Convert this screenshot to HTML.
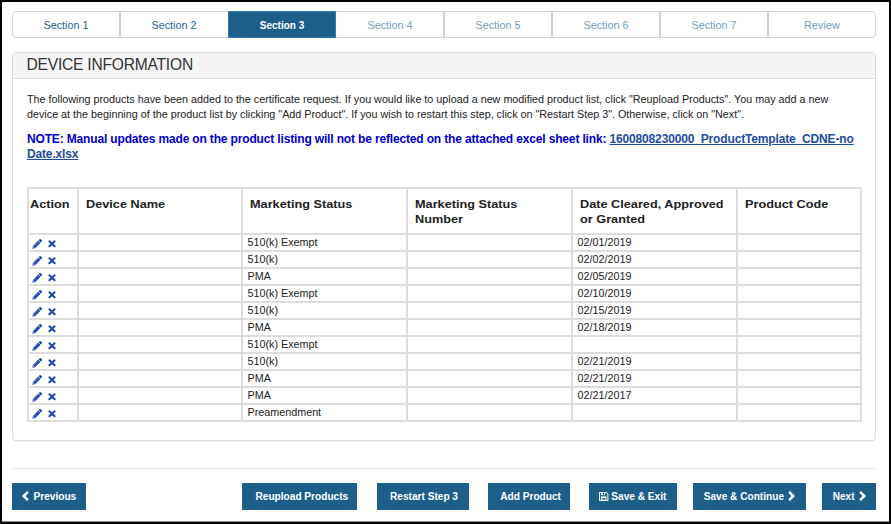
<!DOCTYPE html>
<html><head><meta charset="utf-8">
<style>
*{box-sizing:border-box;margin:0;padding:0}
html,body{width:891px;height:524px;overflow:hidden;background:#fff}
body{font-family:"Liberation Sans",sans-serif;position:relative;color:#222}
div,span,svg{position:absolute}
.fr{left:0;top:0;width:891px;height:524px;border:2px solid #000;z-index:10}
.fb{left:2px;top:521px;width:887px;height:1px;background:#8c8c8c;z-index:10}
.tabs{left:12px;top:11px;width:864px;height:27px;border:1px solid #d4d4d4;border-radius:4px;background:#fff}
.tab{top:11px;width:108px;height:27px;text-align:center;font-size:10.8px;line-height:29px;color:#709dbc;white-space:nowrap}
.tab.done{color:#246394}
.tab.act{background:#1e5f8a;border:1px solid #337ab7;color:#fff;font-weight:bold;font-size:10px;line-height:27px}
.sep{top:12px;width:2px;height:25px;background:#d0d0d0}
.panel{left:12px;top:52px;width:864px;height:389px;border:1px solid #ddd;border-radius:4px;background:#fff;box-shadow:0 1px 1px rgba(0,0,0,.05)}
.phead{left:13px;top:53px;width:862px;height:25px;background:#f5f5f5;border-radius:3px 3px 0 0}
.pline{left:13px;top:78px;width:862px;height:1px;background:#ddd}
.h{left:26.5px;top:52px;font-size:15.6px;letter-spacing:-.22px;line-height:26px;color:#333;white-space:nowrap}
.p{left:27px;font-size:10.78px;line-height:14px;color:#222;white-space:nowrap}
.n{left:27px;font-size:12px;letter-spacing:-.155px;line-height:16px;color:#0000cd;font-weight:bold;white-space:nowrap}
.n u{color:#1d4ba0}
.v{top:187px;width:2px;height:235px;background:#ddd}
.hl{left:27px;width:835px;height:2px;background:#ddd}
.th{top:197px;font-size:11.3px;line-height:14.6px;font-weight:bold;color:#222;white-space:nowrap;transform:scaleX(1.125);transform-origin:0 0}
.td{font-size:10.78px;line-height:15px;height:15px;color:#222;white-space:nowrap}
.hr{left:12px;top:468px;width:864px;height:1px;background:#e8e8e8}
.btn{top:483px;height:27px;background:#1e5f8a}
.bt{top:483px;height:27px;color:#fff;font-weight:bold;font-size:10.12px;line-height:27px;white-space:nowrap}

</style></head><body>
<div class="tabs"></div>
<div class="tab done" style="left:12px">Section 1</div>
<div class="tab done" style="left:120px">Section 2</div>
<div class="tab act" style="left:228px">Section 3</div>
<div class="tab" style="left:336px">Section 4</div>
<div class="tab" style="left:444px">Section 5</div>
<div class="tab" style="left:552px">Section 6</div>
<div class="tab" style="left:660px">Section 7</div>
<div class="tab" style="left:768px">Review</div>
<div class="sep" style="left:119px"></div>
<div class="sep" style="left:443px"></div>
<div class="sep" style="left:551px"></div>
<div class="sep" style="left:659px"></div>
<div class="sep" style="left:767px"></div>
<div class="panel"></div><div class="phead"></div><div class="pline"></div>
<div class="h">DEVICE INFORMATION</div>
<div class="p" style="top:92px">The following products have been added to the certificate request. If you would like to upload a new modified product list, click "Reupload Products". You may add a new</div>
<div class="p" style="top:106px;transform:translateY(.5px)">device at the beginning of the product list by clicking "Add Product". If you wish to restart this step, click on "Restart Step 3". Otherwise, click on "Next".</div>
<div class="n" style="top:131px">NOTE: Manual updates made on the product listing will not be reflected on the attached excel sheet link: <u>1600808230000_ProductTemplate_CDNE-no</u></div>
<div class="n" style="top:146px"><u>Date.xlsx</u></div>
<div class="v" style="left:27px"></div>
<div class="v" style="left:77px"></div>
<div class="v" style="left:241px"></div>
<div class="v" style="left:406px"></div>
<div class="v" style="left:571px"></div>
<div class="v" style="left:736px"></div>
<div class="v" style="left:860px"></div>
<div class="hl" style="top:187px"></div>
<div class="hl" style="top:233px"></div>
<div class="hl" style="top:250px"></div>
<div class="hl" style="top:267px"></div>
<div class="hl" style="top:284px"></div>
<div class="hl" style="top:301px"></div>
<div class="hl" style="top:318px"></div>
<div class="hl" style="top:335px"></div>
<div class="hl" style="top:352px"></div>
<div class="hl" style="top:369px"></div>
<div class="hl" style="top:386px"></div>
<div class="hl" style="top:403px"></div>
<div class="hl" style="top:420px"></div>
<div class="th" style="left:30.2px">Action</div>
<div class="th" style="left:86px">Device Name</div>
<div class="th" style="left:250px">Marketing Status</div>
<div class="th" style="left:415px">Marketing Status<br>Number</div>
<div class="th" style="left:580px">Date Cleared, Approved<br>or Granted</div>
<div class="th" style="left:745px">Product Code</div>
<svg style="left:32px;top:238.6px" width="10" height="10" viewBox="0 0 10 10"><path d="M0.9 7.0 L6.3 1.6 L8.5 3.8 L3.1 9.2 Z" fill="#1a48ad"/><path d="M0.9 7.0 L3.1 9.2 L0.2 9.9 Z" fill="#4a55b5" opacity=".8"/><path d="M6.7 1.2 L7.8 0.1 Q8.2 -0.2 8.7 0.2 L9.9 1.4 Q10.2 1.8 9.9 2.3 L8.9 3.4 Z" fill="#1644ab"/><path d="M1.9 6.9 L6.5 2.3" stroke="#fff" stroke-width=".9" stroke-dasharray=".55 .75" opacity=".75" fill="none"/></svg>
<svg style="left:48px;top:239.7px" width="8" height="8" viewBox="0 0 8 8"><path d="M1.4 1.35 L6.6 6.25 M6.6 1.35 L1.4 6.25" stroke="#1a48ad" stroke-width="2.05" stroke-linecap="round" fill="none"/></svg>
<div class="td" style="left:247.5px;top:235px">510(k) Exempt</div>
<div class="td" style="left:577.5px;top:235px">02/01/2019</div>
<svg style="left:32px;top:255.6px" width="10" height="10" viewBox="0 0 10 10"><path d="M0.9 7.0 L6.3 1.6 L8.5 3.8 L3.1 9.2 Z" fill="#1a48ad"/><path d="M0.9 7.0 L3.1 9.2 L0.2 9.9 Z" fill="#4a55b5" opacity=".8"/><path d="M6.7 1.2 L7.8 0.1 Q8.2 -0.2 8.7 0.2 L9.9 1.4 Q10.2 1.8 9.9 2.3 L8.9 3.4 Z" fill="#1644ab"/><path d="M1.9 6.9 L6.5 2.3" stroke="#fff" stroke-width=".9" stroke-dasharray=".55 .75" opacity=".75" fill="none"/></svg>
<svg style="left:48px;top:256.7px" width="8" height="8" viewBox="0 0 8 8"><path d="M1.4 1.35 L6.6 6.25 M6.6 1.35 L1.4 6.25" stroke="#1a48ad" stroke-width="2.05" stroke-linecap="round" fill="none"/></svg>
<div class="td" style="left:247.5px;top:252px">510(k)</div>
<div class="td" style="left:577.5px;top:252px">02/02/2019</div>
<svg style="left:32px;top:272.6px" width="10" height="10" viewBox="0 0 10 10"><path d="M0.9 7.0 L6.3 1.6 L8.5 3.8 L3.1 9.2 Z" fill="#1a48ad"/><path d="M0.9 7.0 L3.1 9.2 L0.2 9.9 Z" fill="#4a55b5" opacity=".8"/><path d="M6.7 1.2 L7.8 0.1 Q8.2 -0.2 8.7 0.2 L9.9 1.4 Q10.2 1.8 9.9 2.3 L8.9 3.4 Z" fill="#1644ab"/><path d="M1.9 6.9 L6.5 2.3" stroke="#fff" stroke-width=".9" stroke-dasharray=".55 .75" opacity=".75" fill="none"/></svg>
<svg style="left:48px;top:273.7px" width="8" height="8" viewBox="0 0 8 8"><path d="M1.4 1.35 L6.6 6.25 M6.6 1.35 L1.4 6.25" stroke="#1a48ad" stroke-width="2.05" stroke-linecap="round" fill="none"/></svg>
<div class="td" style="left:247.5px;top:269px">PMA</div>
<div class="td" style="left:577.5px;top:269px">02/05/2019</div>
<svg style="left:32px;top:289.6px" width="10" height="10" viewBox="0 0 10 10"><path d="M0.9 7.0 L6.3 1.6 L8.5 3.8 L3.1 9.2 Z" fill="#1a48ad"/><path d="M0.9 7.0 L3.1 9.2 L0.2 9.9 Z" fill="#4a55b5" opacity=".8"/><path d="M6.7 1.2 L7.8 0.1 Q8.2 -0.2 8.7 0.2 L9.9 1.4 Q10.2 1.8 9.9 2.3 L8.9 3.4 Z" fill="#1644ab"/><path d="M1.9 6.9 L6.5 2.3" stroke="#fff" stroke-width=".9" stroke-dasharray=".55 .75" opacity=".75" fill="none"/></svg>
<svg style="left:48px;top:290.7px" width="8" height="8" viewBox="0 0 8 8"><path d="M1.4 1.35 L6.6 6.25 M6.6 1.35 L1.4 6.25" stroke="#1a48ad" stroke-width="2.05" stroke-linecap="round" fill="none"/></svg>
<div class="td" style="left:247.5px;top:286px">510(k) Exempt</div>
<div class="td" style="left:577.5px;top:286px">02/10/2019</div>
<svg style="left:32px;top:306.6px" width="10" height="10" viewBox="0 0 10 10"><path d="M0.9 7.0 L6.3 1.6 L8.5 3.8 L3.1 9.2 Z" fill="#1a48ad"/><path d="M0.9 7.0 L3.1 9.2 L0.2 9.9 Z" fill="#4a55b5" opacity=".8"/><path d="M6.7 1.2 L7.8 0.1 Q8.2 -0.2 8.7 0.2 L9.9 1.4 Q10.2 1.8 9.9 2.3 L8.9 3.4 Z" fill="#1644ab"/><path d="M1.9 6.9 L6.5 2.3" stroke="#fff" stroke-width=".9" stroke-dasharray=".55 .75" opacity=".75" fill="none"/></svg>
<svg style="left:48px;top:307.7px" width="8" height="8" viewBox="0 0 8 8"><path d="M1.4 1.35 L6.6 6.25 M6.6 1.35 L1.4 6.25" stroke="#1a48ad" stroke-width="2.05" stroke-linecap="round" fill="none"/></svg>
<div class="td" style="left:247.5px;top:303px">510(k)</div>
<div class="td" style="left:577.5px;top:303px">02/15/2019</div>
<svg style="left:32px;top:323.6px" width="10" height="10" viewBox="0 0 10 10"><path d="M0.9 7.0 L6.3 1.6 L8.5 3.8 L3.1 9.2 Z" fill="#1a48ad"/><path d="M0.9 7.0 L3.1 9.2 L0.2 9.9 Z" fill="#4a55b5" opacity=".8"/><path d="M6.7 1.2 L7.8 0.1 Q8.2 -0.2 8.7 0.2 L9.9 1.4 Q10.2 1.8 9.9 2.3 L8.9 3.4 Z" fill="#1644ab"/><path d="M1.9 6.9 L6.5 2.3" stroke="#fff" stroke-width=".9" stroke-dasharray=".55 .75" opacity=".75" fill="none"/></svg>
<svg style="left:48px;top:324.7px" width="8" height="8" viewBox="0 0 8 8"><path d="M1.4 1.35 L6.6 6.25 M6.6 1.35 L1.4 6.25" stroke="#1a48ad" stroke-width="2.05" stroke-linecap="round" fill="none"/></svg>
<div class="td" style="left:247.5px;top:320px">PMA</div>
<div class="td" style="left:577.5px;top:320px">02/18/2019</div>
<svg style="left:32px;top:340.6px" width="10" height="10" viewBox="0 0 10 10"><path d="M0.9 7.0 L6.3 1.6 L8.5 3.8 L3.1 9.2 Z" fill="#1a48ad"/><path d="M0.9 7.0 L3.1 9.2 L0.2 9.9 Z" fill="#4a55b5" opacity=".8"/><path d="M6.7 1.2 L7.8 0.1 Q8.2 -0.2 8.7 0.2 L9.9 1.4 Q10.2 1.8 9.9 2.3 L8.9 3.4 Z" fill="#1644ab"/><path d="M1.9 6.9 L6.5 2.3" stroke="#fff" stroke-width=".9" stroke-dasharray=".55 .75" opacity=".75" fill="none"/></svg>
<svg style="left:48px;top:341.7px" width="8" height="8" viewBox="0 0 8 8"><path d="M1.4 1.35 L6.6 6.25 M6.6 1.35 L1.4 6.25" stroke="#1a48ad" stroke-width="2.05" stroke-linecap="round" fill="none"/></svg>
<div class="td" style="left:247.5px;top:337px">510(k) Exempt</div>
<svg style="left:32px;top:357.6px" width="10" height="10" viewBox="0 0 10 10"><path d="M0.9 7.0 L6.3 1.6 L8.5 3.8 L3.1 9.2 Z" fill="#1a48ad"/><path d="M0.9 7.0 L3.1 9.2 L0.2 9.9 Z" fill="#4a55b5" opacity=".8"/><path d="M6.7 1.2 L7.8 0.1 Q8.2 -0.2 8.7 0.2 L9.9 1.4 Q10.2 1.8 9.9 2.3 L8.9 3.4 Z" fill="#1644ab"/><path d="M1.9 6.9 L6.5 2.3" stroke="#fff" stroke-width=".9" stroke-dasharray=".55 .75" opacity=".75" fill="none"/></svg>
<svg style="left:48px;top:358.7px" width="8" height="8" viewBox="0 0 8 8"><path d="M1.4 1.35 L6.6 6.25 M6.6 1.35 L1.4 6.25" stroke="#1a48ad" stroke-width="2.05" stroke-linecap="round" fill="none"/></svg>
<div class="td" style="left:247.5px;top:354px">510(k)</div>
<div class="td" style="left:577.5px;top:354px">02/21/2019</div>
<svg style="left:32px;top:374.6px" width="10" height="10" viewBox="0 0 10 10"><path d="M0.9 7.0 L6.3 1.6 L8.5 3.8 L3.1 9.2 Z" fill="#1a48ad"/><path d="M0.9 7.0 L3.1 9.2 L0.2 9.9 Z" fill="#4a55b5" opacity=".8"/><path d="M6.7 1.2 L7.8 0.1 Q8.2 -0.2 8.7 0.2 L9.9 1.4 Q10.2 1.8 9.9 2.3 L8.9 3.4 Z" fill="#1644ab"/><path d="M1.9 6.9 L6.5 2.3" stroke="#fff" stroke-width=".9" stroke-dasharray=".55 .75" opacity=".75" fill="none"/></svg>
<svg style="left:48px;top:375.7px" width="8" height="8" viewBox="0 0 8 8"><path d="M1.4 1.35 L6.6 6.25 M6.6 1.35 L1.4 6.25" stroke="#1a48ad" stroke-width="2.05" stroke-linecap="round" fill="none"/></svg>
<div class="td" style="left:247.5px;top:371px">PMA</div>
<div class="td" style="left:577.5px;top:371px">02/21/2019</div>
<svg style="left:32px;top:391.6px" width="10" height="10" viewBox="0 0 10 10"><path d="M0.9 7.0 L6.3 1.6 L8.5 3.8 L3.1 9.2 Z" fill="#1a48ad"/><path d="M0.9 7.0 L3.1 9.2 L0.2 9.9 Z" fill="#4a55b5" opacity=".8"/><path d="M6.7 1.2 L7.8 0.1 Q8.2 -0.2 8.7 0.2 L9.9 1.4 Q10.2 1.8 9.9 2.3 L8.9 3.4 Z" fill="#1644ab"/><path d="M1.9 6.9 L6.5 2.3" stroke="#fff" stroke-width=".9" stroke-dasharray=".55 .75" opacity=".75" fill="none"/></svg>
<svg style="left:48px;top:392.7px" width="8" height="8" viewBox="0 0 8 8"><path d="M1.4 1.35 L6.6 6.25 M6.6 1.35 L1.4 6.25" stroke="#1a48ad" stroke-width="2.05" stroke-linecap="round" fill="none"/></svg>
<div class="td" style="left:247.5px;top:388px">PMA</div>
<div class="td" style="left:577.5px;top:388px">02/21/2017</div>
<svg style="left:32px;top:408.6px" width="10" height="10" viewBox="0 0 10 10"><path d="M0.9 7.0 L6.3 1.6 L8.5 3.8 L3.1 9.2 Z" fill="#1a48ad"/><path d="M0.9 7.0 L3.1 9.2 L0.2 9.9 Z" fill="#4a55b5" opacity=".8"/><path d="M6.7 1.2 L7.8 0.1 Q8.2 -0.2 8.7 0.2 L9.9 1.4 Q10.2 1.8 9.9 2.3 L8.9 3.4 Z" fill="#1644ab"/><path d="M1.9 6.9 L6.5 2.3" stroke="#fff" stroke-width=".9" stroke-dasharray=".55 .75" opacity=".75" fill="none"/></svg>
<svg style="left:48px;top:409.7px" width="8" height="8" viewBox="0 0 8 8"><path d="M1.4 1.35 L6.6 6.25 M6.6 1.35 L1.4 6.25" stroke="#1a48ad" stroke-width="2.05" stroke-linecap="round" fill="none"/></svg>
<div class="td" style="left:247.5px;top:405px">Preamendment</div>
<div class="hr"></div>
<div class="btn" style="left:12px;width:74px"></div><div class="bt" style="left:33.5px">Previous</div>
<div class="btn" style="left:242px;width:115px"></div><div class="bt" style="left:255.5px">Reupload Products</div>
<div class="btn" style="left:377px;width:92px"></div><div class="bt" style="left:390px">Restart Step 3</div>
<div class="btn" style="left:488px;width:82px"></div><div class="bt" style="left:500.3px">Add Product</div>
<div class="btn" style="left:589px;width:88px"></div><div class="bt" style="left:611.3px">Save &amp; Exit</div>
<div class="btn" style="left:693px;width:113px"></div><div class="bt" style="left:703.7px">Save &amp; Continue</div>
<div class="btn" style="left:822px;width:54px"></div><div class="bt" style="left:832.7px">Next</div>
<svg style="left:21.8px;top:490.7px" width="7" height="10" viewBox="0 0 7 10"><path d="M5 0 L6.8 1.8 L3.6 5 L6.8 8.2 L5 10 L0 5 Z" fill="#fff"/></svg>
<svg style="left:599.15px;top:491.9px" width="9.4" height="9" viewBox="0 0 9.4 9"><path d="M0 0.5 Q0 0 0.5 0 L7.3 0 L9.4 2.1 L9.4 8.5 Q9.4 9 8.9 9 L0.5 9 Q0 9 0 8.5 Z" fill="#fff"/><path d="M1.0 1.0 H7.1 L8.4 2.3 V8.0 H1.0 Z" fill="#1e5f8a"/><rect x="2.0" y="0.9" width="3.9" height="2.3" fill="#fff"/><rect x="3.8" y="0.9" width="1.4" height="1.8" fill="#1e5f8a"/><rect x="2.0" y="4.4" width="5.4" height="3.7" fill="#fff"/><rect x="2.9" y="6.2" width="3.7" height="1.4" fill="#1e5f8a"/></svg>
<svg style="left:788.4px;top:490.7px" width="7" height="10" viewBox="0 0 7 10"><path d="M2 0 L0.2 1.8 L3.4 5 L0.2 8.2 L2 10 L7 5 Z" fill="#fff"/></svg>
<svg style="left:858.6px;top:490.7px" width="7" height="10" viewBox="0 0 7 10"><path d="M2 0 L0.2 1.8 L3.4 5 L0.2 8.2 L2 10 L7 5 Z" fill="#fff"/></svg>
<div class="fr"></div><div class="fb"></div>
</body></html>
